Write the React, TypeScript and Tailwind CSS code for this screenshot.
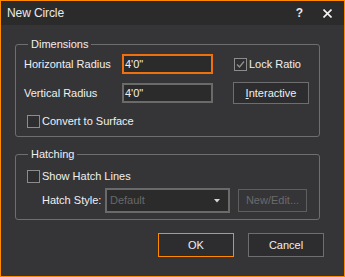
import React from "react";

function Checkbox({ checked }: { checked?: boolean }) {
  return (
    <div className="w-[13px] h-[13px] border border-[#8c8c8c] bg-[#2e2e30] flex items-center justify-center shrink-0">
      {checked && (
        <svg width="9" height="9" viewBox="0 0 9 9">
          <path d="M1 4.5 L3.5 7 L8 1.5" stroke="#8e8e8e" strokeWidth="1.4" fill="none" />
        </svg>
      )}
    </div>
  );
}

export default function App() {
  return (
    <div className="w-[345px] h-[277px] border border-[#ff8a00] bg-[#353538] flex flex-col font-['Liberation_Sans',Arial,sans-serif] text-[11px] text-[#f0f0f0] overflow-hidden">
      {/* Title bar */}
      <div className="h-[24px] bg-[#2b2b2c] flex items-center shrink-0">
        <span className="ml-[6px] text-[12px] text-[#ececec] tracking-[-0.1px]">New Circle</span>
        <span className="ml-auto mr-[1px] text-[12px] font-bold text-[#e8e8e8]">?</span>
        <svg className="ml-[19px] mr-[12px]" width="9" height="9" viewBox="0 0 9 9">
          <path d="M0.5 0.5 L8.5 8.5 M8.5 0.5 L0.5 8.5" stroke="#f4f4f4" strokeWidth="1.6" />
        </svg>
      </div>

      {/* Dimensions */}
      <fieldset className="ml-[14px] mt-[12px] w-[305px] border border-[#6e6e6e] rounded-[3px] pl-[8px] pb-[8px]">
        <legend className="ml-[4px] px-[3px] leading-[14px]">Dimensions</legend>
        <div className="flex items-center h-[20px] mt-[3px]">
          <span className="w-[98px]">Horizontal Radius</span>
          <div className="w-[91px] h-[20px] border-2 border-[#f07010] bg-[#2b2b2c] flex items-center pl-[1px]">4'0"</div>
          <div className="ml-[21px] flex items-center">
            <Checkbox checked />
            <span className="ml-[2px]">Lock Ratio</span>
          </div>
        </div>
        <div className="flex items-center h-[22px] mt-[8px]">
          <span className="w-[98px]">Vertical Radius</span>
          <div className="w-[91px] h-[20px] border-2 border-[#6a6a6a] bg-[#2b2b2c] flex items-center pl-[1px]">4'0"</div>
          <div className="ml-[20px] w-[76px] h-[22px] border border-[#6e6e6e] bg-[#2d2d2f] flex items-center justify-center">
            <span><span className="underline">I</span>nteractive</span>
          </div>
        </div>
        <div className="flex items-center h-[13px] mt-[11px] ml-[3px]">
          <Checkbox />
          <span className="ml-[2px]">Convert to Surface</span>
        </div>
      </fieldset>

      {/* Hatching */}
      <fieldset className="ml-[14px] mt-[10px] w-[305px] border border-[#6e6e6e] rounded-[3px] pl-[8px] pb-[6px]">
        <legend className="ml-[4px] px-[3px] leading-[14px]">Hatching</legend>
        <div className="flex items-center h-[13px] mt-[9px] ml-[3px]">
          <Checkbox />
          <span className="ml-[2px]">Show Hatch Lines</span>
        </div>
        <div className="flex items-center h-[25px] mt-[5px]">
          <span className="ml-[18px] w-[63px]">Hatch Style:</span>
          <div className="w-[125px] h-[25px] border-2 border-[#6a6a6a] bg-[#2b2b2c] flex items-center pl-[3px] text-[#686868]">
            <span>Default</span>
            <svg className="ml-auto mr-[8px]" width="6" height="4" viewBox="0 0 6 4">
              <path d="M0 0 L6 0 L3 3.5 Z" fill="#d8d8d8" />
            </svg>
          </div>
          <div className="ml-[8px] w-[69px] h-[23px] border border-[#5e5e5e] bg-[#353538] flex items-center justify-center text-[#6a6a6a]">
            New/Edit...
          </div>
        </div>
      </fieldset>

      {/* Buttons */}
      <div className="flex mt-[13px] ml-[157px]">
        <div className="w-[76px] h-[24px] border border-[#ff8a00] bg-[#2d2d2f] flex items-center justify-center">OK</div>
        <div className="ml-[14px] w-[76px] h-[24px] border border-[#6e6e6e] bg-[#2d2d2f] flex items-center justify-center">Cancel</div>
      </div>
    </div>
  );
}
